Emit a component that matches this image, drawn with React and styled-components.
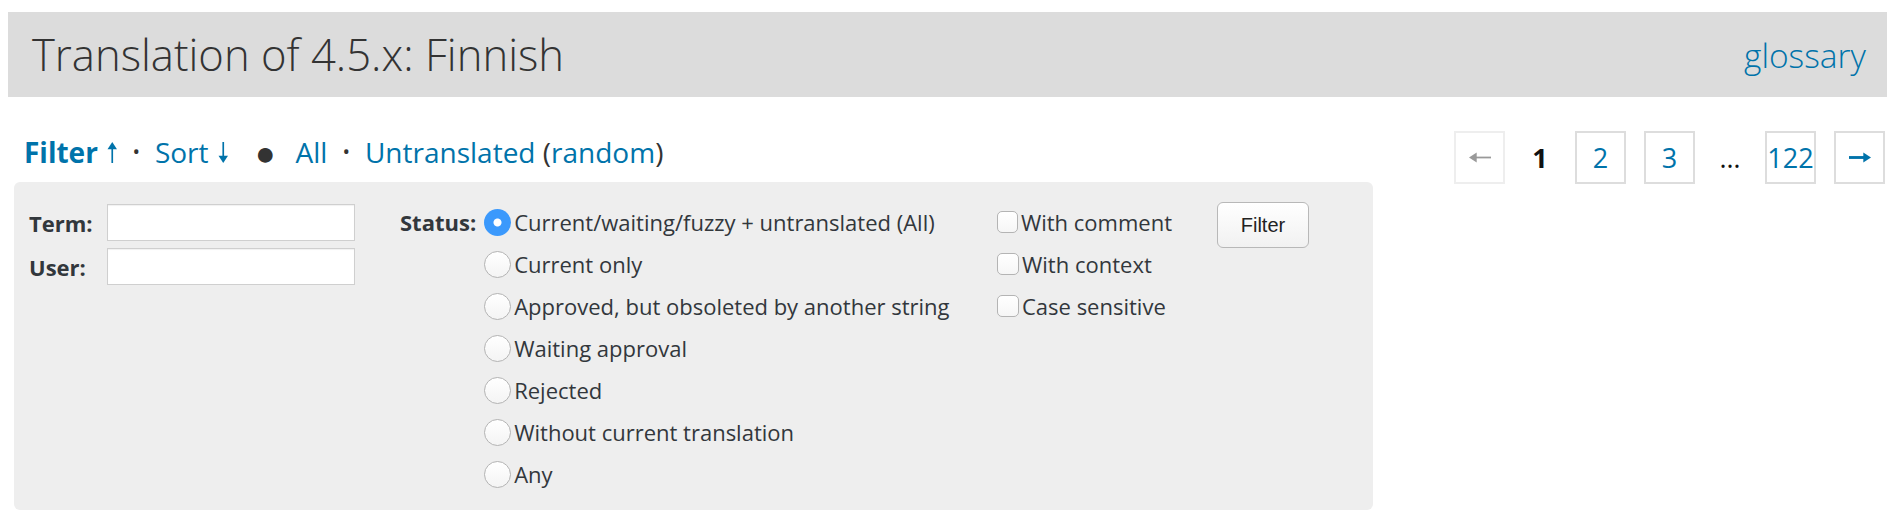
import React from 'react'
import styled, {createGlobalStyle} from 'styled-components'

const Global = createGlobalStyle`
  html, body {
    margin: 0;
    padding: 0;
    background: #fff;
  }
  body {
    font-family: 'Open Sans', 'Noto Sans', sans-serif;
    color: #32373c;
  }
`

const blue = '#0073aa'

const Header = styled.div`
  display: flex;
  align-items: center;
  justify-content: space-between;
  height: 85px;
  margin: 12px 13px 0 8px;
  padding: 0 21px 0 24px;
  background: #dcdcdc;
`

const Title = styled.h2`
  margin: 0 0 2px 0;
  font-size: 43.6px;
  font-weight: 300;
  color: #333;
`

const HeaderLink = styled.a`
  font-size: 33.5px;
  font-weight: 300;
  color: ${blue};
  text-decoration: none;
`

const Toolbar = styled.div`
  display: flex;
  justify-content: space-between;
  align-items: flex-start;
  height: 51px;
  margin-top: 34px;
  padding: 0 15px 0 24px;
`

const FilterLine = styled.div`
  display: flex;
  align-items: center;
  gap: 15px;
  padding-top: 3px;
  font-size: 28px;
  line-height: 36px;
`

const ToolLink = styled.a`
  display: inline-flex;
  align-items: center;
  gap: 9px;
  color: ${blue};
  text-decoration: none;
  font-weight: ${p => (p.$bold ? 700 : 400)};
`

const Dot = styled.span`
  color: #333;
  font-size: ${p => (p.$big ? '34px' : '20px')};
  margin: ${p => (p.$big ? '0 5px 0 12px' : '0')};
`

const Paren = styled.span`
  color: #333;
`

const Pages = styled.div`
  display: flex;
  align-items: center;
  gap: 18px;
`

const PageBox = styled.a`
  display: flex;
  align-items: center;
  justify-content: center;
  box-sizing: border-box;
  width: 51px;
  height: 53px;
  border: 2px solid ${p => (p.$disabled ? '#eee' : '#ddd')};
  color: ${p => (p.$disabled ? '#999' : blue)};
  font-size: 27px;
  text-decoration: none;
`

const PagePlain = styled.span`
  width: 34px;
  text-align: center;
  font-size: 27px;
  font-weight: ${p => (p.$current ? 700 : 400)};
  color: #111;
`

const Panel = styled.form`
  display: grid;
  grid-template-columns: 326px 552px 175px auto;
  column-gap: 45px;
  align-items: start;
  box-sizing: border-box;
  width: 1359px;
  height: 328px;
  margin-left: 14px;
  padding: 19px 15px;
  background: #eee;
  border-radius: 6px;
  font-size: 22px;
`

const Fields = styled.div`
  display: grid;
  grid-template-columns: 78px 248px;
  row-gap: 7px;
  align-items: center;
  padding-top: 3px;
`

const Label = styled.label`
  font-weight: 700;
  color: #32373c;
`

const TextInput = styled.input`
  box-sizing: border-box;
  width: 248px;
  height: 37px;
  border: 1px solid #cfcfcf;
  box-shadow: inset 0 1px 1px rgba(0, 0, 0, 0.06);
  background: #fff;
  font-size: 20px;
`

const StatusGroup = styled.div`
  display: flex;
  align-items: flex-start;
  gap: 8px;
`

const StatusLabel = styled(Label)`
  line-height: 42px;
`

const Options = styled.div`
  display: flex;
  flex-direction: column;
`

const Option = styled.label`
  display: flex;
  align-items: center;
  gap: 3px;
  height: 42px;
  white-space: nowrap;
`

const Radio = styled.input.attrs({type: 'radio'})`
  appearance: none;
  box-sizing: border-box;
  width: 27px;
  height: 27px;
  margin: 0;
  border-radius: 50%;
  border: 1px solid #b4b4b4;
  background: linear-gradient(#fff, #f4f4f4);
  &:checked {
    border: none;
    background: radial-gradient(circle, #fff 0 3.5px, #3b99fc 4.5px);
  }
`

const Check = styled.input.attrs({type: 'checkbox'})`
  appearance: none;
  box-sizing: border-box;
  width: 22px;
  height: 22px;
  margin: 0;
  border-radius: 5px;
  border: 1px solid #b4b4b4;
  background: linear-gradient(#fff, #f6f6f6);
`

const Button = styled.button`
  box-sizing: border-box;
  width: 92px;
  height: 46px;
  margin-top: 1px;
  border: 1px solid #b8b8b8;
  border-radius: 6px;
  background: linear-gradient(#fff, #f1f1f1);
  font-family: 'Liberation Sans', Arial, sans-serif;
  font-size: 20px;
  color: #222;
`

// thin shaft with a solid head, like the arrows beside the toolbar links
const Arrow = ({dir, size = 20, weight = 2}) => {
  const vertical = dir === 'up' || dir === 'down'
  const rot = {up: 0, right: 90, down: 180, left: 270}[dir]
  const w = vertical ? size * 0.5 : size
  const h = vertical ? size : size * 0.5
  return (
    <svg width={w} height={h} viewBox={vertical ? '0 0 10 20' : '0 0 20 10'}>
      <g transform={`rotate(${rot} ${vertical ? '5 10' : '10 5'}) ${vertical ? '' : 'translate(5 -5)'}`}>
        <path d="M5 4 V20" stroke="currentColor" strokeWidth={weight} />
        <path d="M5 0 L9.5 7 H0.5 Z" fill="currentColor" />
      </g>
    </svg>
  )
}

const statuses = [
  'Current/waiting/fuzzy + untranslated (All)',
  'Current only',
  'Approved, but obsoleted by another string',
  'Waiting approval',
  'Rejected',
  'Without current translation',
  'Any',
]

const flags = ['With comment', 'With context', 'Case sensitive']

export default function App() {
  return (
    <>
      <Global />
      <Header>
        <Title>Translation of 4.5.x: Finnish</Title>
        <HeaderLink href="#">glossary</HeaderLink>
      </Header>

      <Toolbar>
        <FilterLine>
          <ToolLink href="#" $bold>Filter <Arrow dir="up" size={21} weight={1.6} /></ToolLink>
          <Dot>•</Dot>
          <ToolLink href="#">Sort <Arrow dir="down" size={21} weight={1.6} /></ToolLink>
          <Dot $big>●</Dot>
          <ToolLink href="#">All</ToolLink>
          <Dot>•</Dot>
          <span>
            <ToolLink href="#">Untranslated</ToolLink> <Paren>(</Paren>
            <ToolLink href="#">random</ToolLink>
            <Paren>)</Paren>
          </span>
        </FilterLine>
        <Pages>
          <PageBox $disabled><Arrow dir="left" size={22} weight={1.6} /></PageBox>
          <PagePlain $current>1</PagePlain>
          <PageBox href="#">2</PageBox>
          <PageBox href="#">3</PageBox>
          <PagePlain>…</PagePlain>
          <PageBox href="#">122</PageBox>
          <PageBox href="#"><Arrow dir="right" size={22} weight={2.6} /></PageBox>
        </Pages>
      </Toolbar>

      <Panel onSubmit={e => e.preventDefault()}>
        <Fields>
          <Label>Term:</Label>
          <TextInput type="text" />
          <Label>User:</Label>
          <TextInput type="text" />
        </Fields>

        <StatusGroup>
          <StatusLabel>Status:</StatusLabel>
          <Options>
            {statuses.map((s, i) => (
              <Option key={s}>
                <Radio name="status" defaultChecked={i === 0} />
                {s}
              </Option>
            ))}
          </Options>
        </StatusGroup>

        <Options>
          {flags.map(f => (
            <Option key={f}>
              <Check />
              {f}
            </Option>
          ))}
        </Options>

        <Button type="submit">Filter</Button>
      </Panel>
    </>
  )
}
